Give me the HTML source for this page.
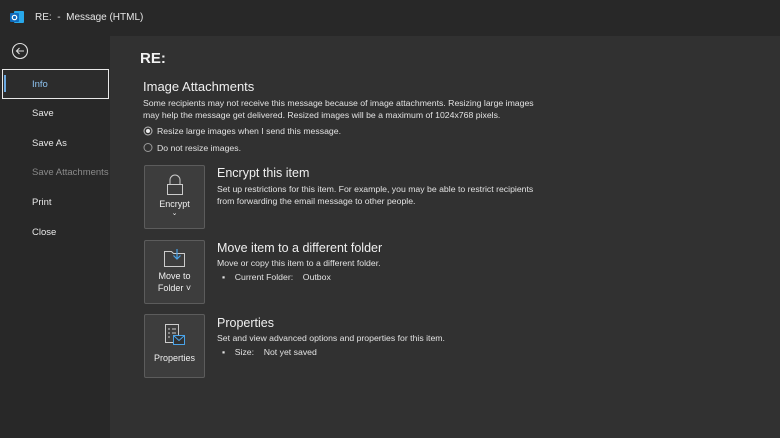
<!DOCTYPE html><html><head><style>
body{margin:0;width:780px;height:438px;background:#282828;font-family:"Liberation Sans",sans-serif;color:#e6e6e6;position:relative;overflow:hidden}
.a{position:absolute;white-space:nowrap}
.side{font-size:9.5px;color:#e8e8e8}
.btn{position:absolute;left:144px;width:59px;height:62px;background:#3d3d3d;border:1px solid #5c5c5c;border-radius:2px;font-size:9px;text-align:center;color:#f0f0f0}
.t{font-size:12.5px;color:#f0f0f0}
.s{font-size:8.7px;color:#e2e2e2}
</style></head><body>
<svg class="a" style="left:10px;top:10px" width="15" height="15"><rect x="4" y="1" width="10" height="12" rx="1" fill="#28a8ea"/><rect x="0" y="3" width="9" height="9" rx="1" fill="#0f6cbd"/><circle cx="4.5" cy="7.5" r="2.2" fill="none" stroke="#fff" stroke-width="1.2"/></svg>
<div class="a" style="left:35px;top:12px;font-size:10px;color:#e6e6e6">RE:&nbsp; -&nbsp; Message (HTML)</div>
<svg class="a" style="left:11px;top:42px" width="18" height="18"><circle cx="9" cy="9" r="7.5" fill="none" stroke="#ddd" stroke-width="1.1"/><path d="M13 9H5.5M8.5 6L5.5 9L8.5 12" fill="none" stroke="#ddd" stroke-width="1.1"/></svg>
<div class="a" style="left:2px;top:69px;width:105px;height:28px;border:1px solid #e8e8e8;background:#2c2c2c"></div>
<div class="a" style="left:4px;top:75px;width:2px;height:17px;background:#6aa8e0"></div>
<div class="a side" style="left:32px;top:79px;color:#8dc3f0">Info</div>
<div class="a side" style="left:32px;top:108px">Save</div>
<div class="a side" style="left:32px;top:138px">Save As</div>
<div class="a side" style="left:32px;top:167px;color:#8a8a8a">Save Attachments</div>
<div class="a side" style="left:32px;top:197px">Print</div>
<div class="a side" style="left:32px;top:227px">Close</div>
<div class="a" style="left:110px;top:36px;width:670px;height:402px;background:#313131"></div>
<div class="a" style="left:140px;top:50px;font-size:15px;font-weight:bold;color:#f2f2f2">RE:</div>
<div class="a" style="left:143px;top:79px;font-size:13px;color:#f0f0f0">Image Attachments</div>
<div class="a s" style="left:143px;top:97px;line-height:12px">Some recipients may not receive this message because of image attachments. Resizing large images<br>may help the message get delivered. Resized images will be a maximum of 1024x768 pixels.</div>
<svg class="a" style="left:143px;top:126px" width="10" height="30"><circle cx="5" cy="5" r="4" fill="none" stroke="#bbb"/><circle cx="5" cy="5" r="2" fill="#eee"/><circle cx="5" cy="21.5" r="4" fill="none" stroke="#999"/></svg>
<div class="a s" style="left:157px;top:126px">Resize large images when I send this message.</div>
<div class="a s" style="left:157px;top:143px">Do not resize images.</div>
<div class="btn" style="top:165px"><svg style="margin-top:8px" width="20" height="22"><path d="M5 10V6a5 5 0 0 1 10 0v4" fill="none" stroke="#ccc"/><rect x="2.5" y="10.5" width="15" height="10" fill="none" stroke="#ccc"/></svg><div style="margin-top:1px">Encrypt</div><div style="font-size:7px">⌄</div></div>
<div class="a t" style="left:217px;top:166px">Encrypt this item</div>
<div class="a s" style="left:217px;top:183px;line-height:12px">Set up restrictions for this item. For example, you may be able to restrict recipients<br>from forwarding the email message to other people.</div>
<div class="btn" style="top:240px"><svg style="margin-top:7px" width="24" height="20"><path d="M1.5 3.5h7l2 2h11v13h-20z" fill="none" stroke="#ccc"/><path d="M14 1v10M10.5 7.5L14 11l3.5-3.5" fill="none" stroke="#4aa3e8" stroke-width="1.2"/></svg><div style="line-height:12px">Move to<br>Folder ˅</div></div>
<div class="a t" style="left:217px;top:241px">Move item to a different folder</div>
<div class="a s" style="left:217px;top:258px">Move or copy this item to a different folder.</div>
<div class="a s" style="left:222px;top:272px">▪&nbsp;&nbsp;&nbsp;&nbsp;Current Folder:&nbsp;&nbsp;&nbsp; Outbox</div>
<div class="btn" style="top:314px"><svg style="margin-top:8px" width="22" height="24"><rect x="1.5" y="1.5" width="13" height="18" fill="none" stroke="#ccc"/><path d="M4 6h2M8 6h4M4 10h2M8 10h4M4 14h2" stroke="#ccc"/><rect x="9.5" y="12.5" width="11" height="9" fill="#313131" stroke="#4aa3e8"/><path d="M9.5 12.5l5.5 5 5.5-5" fill="none" stroke="#4aa3e8"/></svg><div style="margin-top:4px">Properties</div></div>
<div class="a t" style="left:217px;top:316px">Properties</div>
<div class="a s" style="left:217px;top:333px">Set and view advanced options and properties for this item.</div>
<div class="a s" style="left:222px;top:347px">▪&nbsp;&nbsp;&nbsp;&nbsp;Size:&nbsp;&nbsp;&nbsp; Not yet saved</div>
</body></html>
